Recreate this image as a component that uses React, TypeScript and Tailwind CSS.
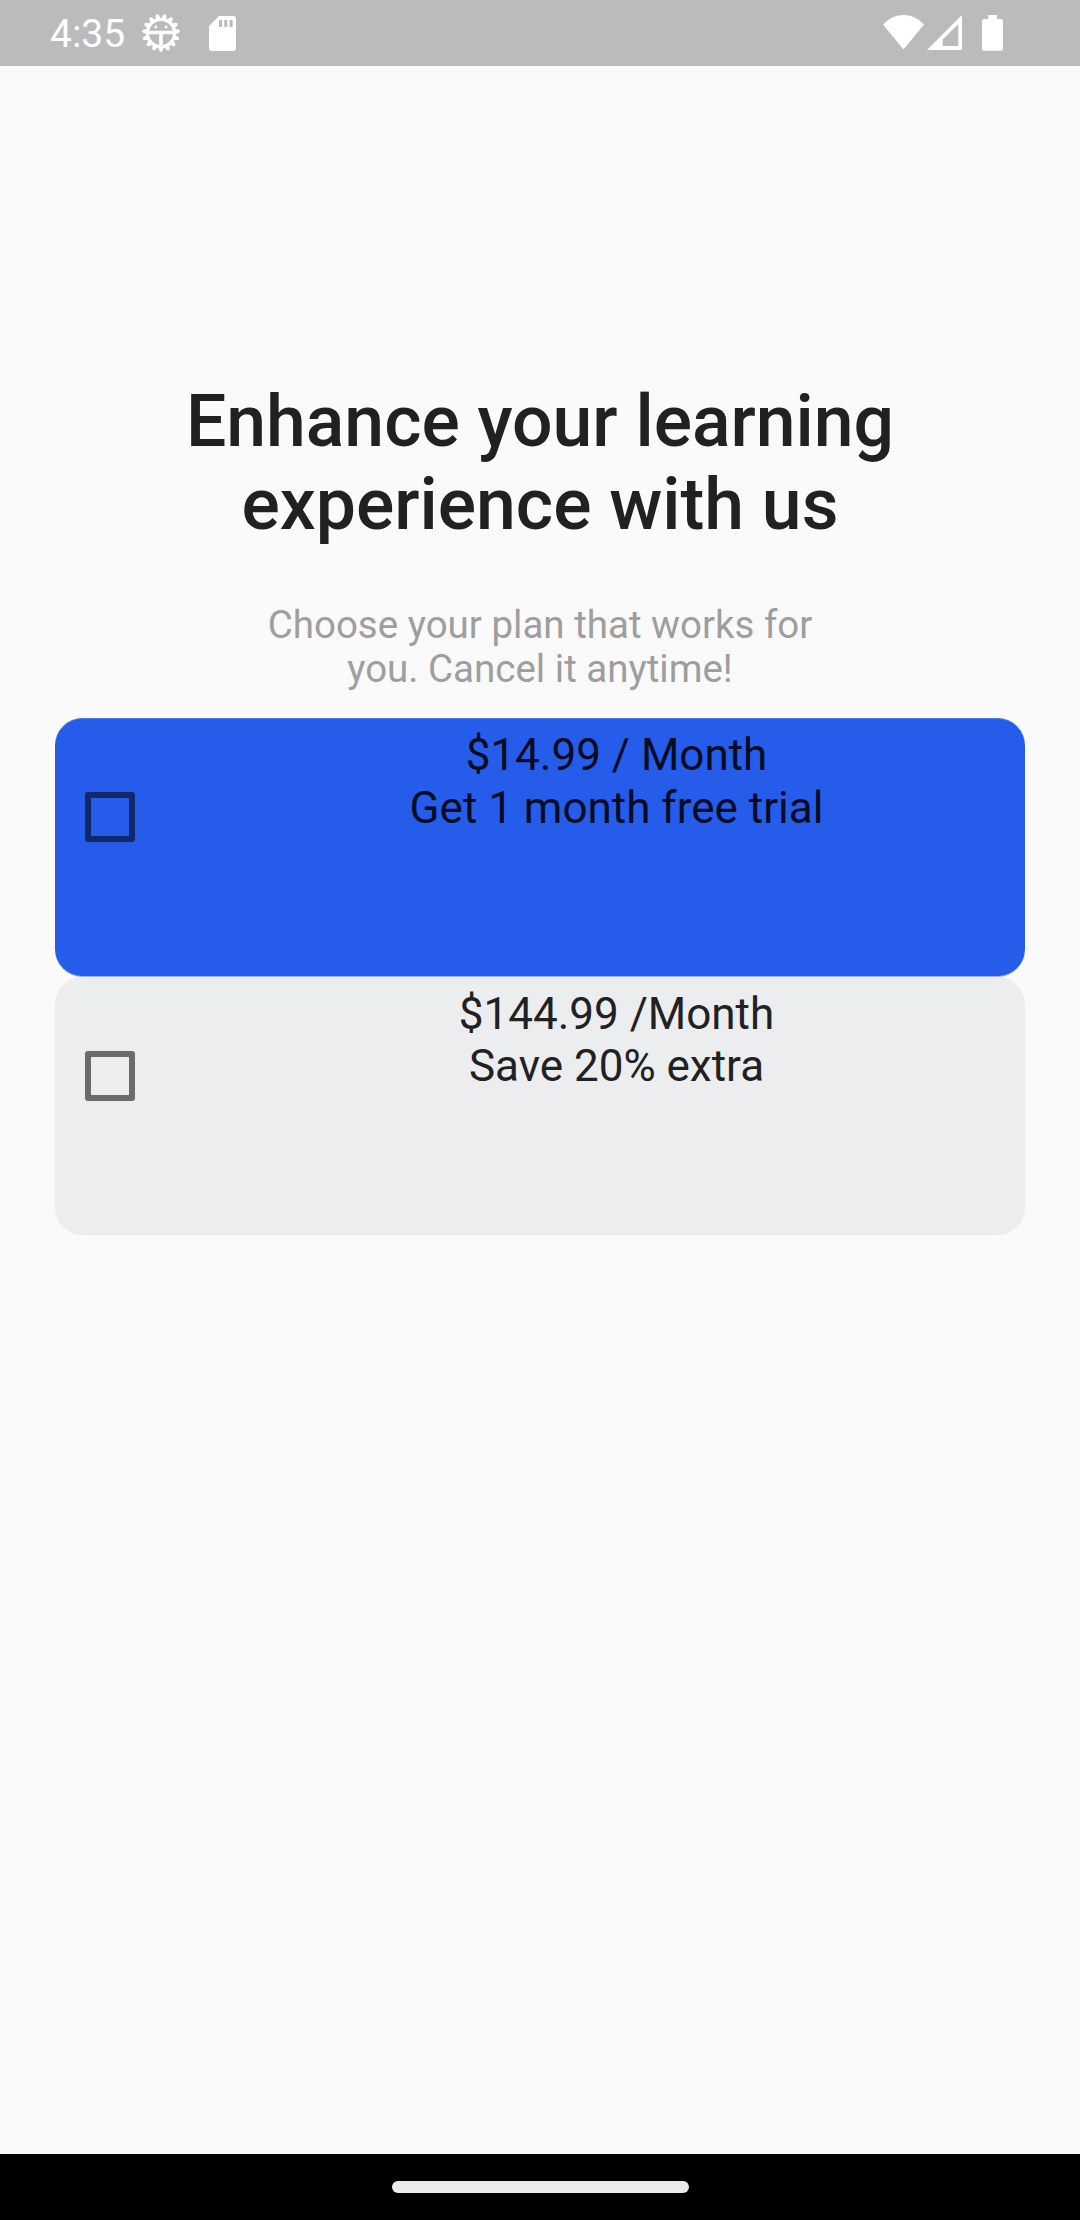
import type { ReactNode } from "react";

const teeth = Array.from({ length: 15 }, (_, i) => i * 24);

function DebugIcon() {
  return (
    <svg className="ml-4 size-10" viewBox="-20 -20 40 40" fill="white">
      {teeth.map((angle) => (
        <path key={angle} d="M-3.2 -13.5 L-1.5 -18 Q0 -20.2 1.5 -18 L3.2 -13.5 Z" transform={`rotate(${angle + 12})`} />
      ))}
      <circle r="13.4" fill="none" stroke="white" strokeWidth="2.8" />
      <path d="M-13 -2.2H13V1.3H1.8V13H-1.8V1.3H-13Z" />
      <circle cx="-5.2" cy="-6" r="1.4" />
      <circle cx="5.2" cy="-6" r="1.4" />
    </svg>
  );
}

function StatusBar() {
  return (
    <header className="flex h-[66px] shrink-0 items-start bg-[#bbbbbb] pl-[50px] text-white">
      <span className="mt-[11px] w-[75px] text-[39px] leading-[46px] whitespace-nowrap">4:35</span>
      <div className="mt-[13px] flex">
        <DebugIcon />
      </div>
      <svg className="mt-4 ml-7 h-[35px] w-[27px]" viewBox="0 0 27 35" fill="white">
        <path fillRule="evenodd" d="M10 0H24Q27 0 27 3V32Q27 35 24 35H3Q0 35 0 32V10ZM10 4V11H13V4ZM15.3 4V11H18.3V4ZM20.6 4V11H23.6V4Z" />
      </svg>
      <svg className="mt-[15px] ml-[647px] h-[35px] w-[41px]" viewBox="0 0 41 35" fill="white">
        <path d="M0 9.5Q8.5 0 20.5 0T41 9.5L20.5 34.5Z" />
      </svg>
      <svg className="mt-[15px] ml-[3px] h-[35px] w-[35px]" viewBox="0 0 35 35" fill="white">
        <path fillRule="evenodd" d="M35 0V35H0ZM31.3 9L15.7 24.5V31H31.3Z" />
      </svg>
      <svg className="mt-[15px] ml-5 h-9 w-[21px]" viewBox="0 0 21 36" fill="white">
        <path d="M6.3 0H15V4H18.5Q21 4 21 6.5V33.3Q21 35.8 18.5 35.8H2.5Q0 35.8 0 33.3V6.5Q0 4 2.5 4H6.3Z" />
      </svg>
    </header>
  );
}

function Plan({ className, boxClass, children }: { className: string; boxClass: string; children: ReactNode }) {
  return (
    <div className={`flex w-[970px] items-start rounded-[27.5px] ${className}`}>
      <span className={`ml-[30px] size-[50px] shrink-0 rounded-[3px] border-[6px] ${boxClass}`} />
      <div className="ml-[73px] flex-1 text-center text-[44px]">{children}</div>
    </div>
  );
}

export default function App() {
  return (
    <div className="flex h-[2220px] w-[1080px] flex-col overflow-hidden bg-[#fafafa] font-['Roboto',sans-serif] text-[#212121]">
      <StatusBar />
      <main className="flex flex-1 flex-col items-center">
        <h1 className="mt-[314px] text-center text-[71.5px] leading-[83px] font-medium">
          Enhance your learning
          <br />
          experience with us
        </h1>
        <p className="mt-[57px] text-center text-[38.5px] leading-[44px] text-[#9e9e9e]">
          Choose your plan that works for
          <br />
          you. Cancel it anytime!
        </p>
        <div className="mt-[27px]">
          <Plan
            className="h-[259px] border-y border-t-[#4d79ec] border-b-[#9db4ed] bg-[#265cea] text-[#040c22]"
            boxClass="mt-[73px] border-[#11296b]"
          >
            <p className="mt-[10px] leading-[53px]">
              $14.99 / Month
              <br />
              Get 1 month free trial
            </p>
          </Plan>
          <Plan className="h-[258px] bg-[#ecedef]" boxClass="mt-[74px] border-[#6b6b6c]">
            <p className="mt-[11px] leading-[52px]">
              $144.99 /Month
              <br />
              Save 20% extra
            </p>
          </Plan>
        </div>
      </main>
      <footer className="flex h-[66px] shrink-0 justify-center bg-black pt-[27px]">
        <div className="h-3 w-[297px] rounded-full bg-[#ebebeb]" />
      </footer>
    </div>
  );
}
